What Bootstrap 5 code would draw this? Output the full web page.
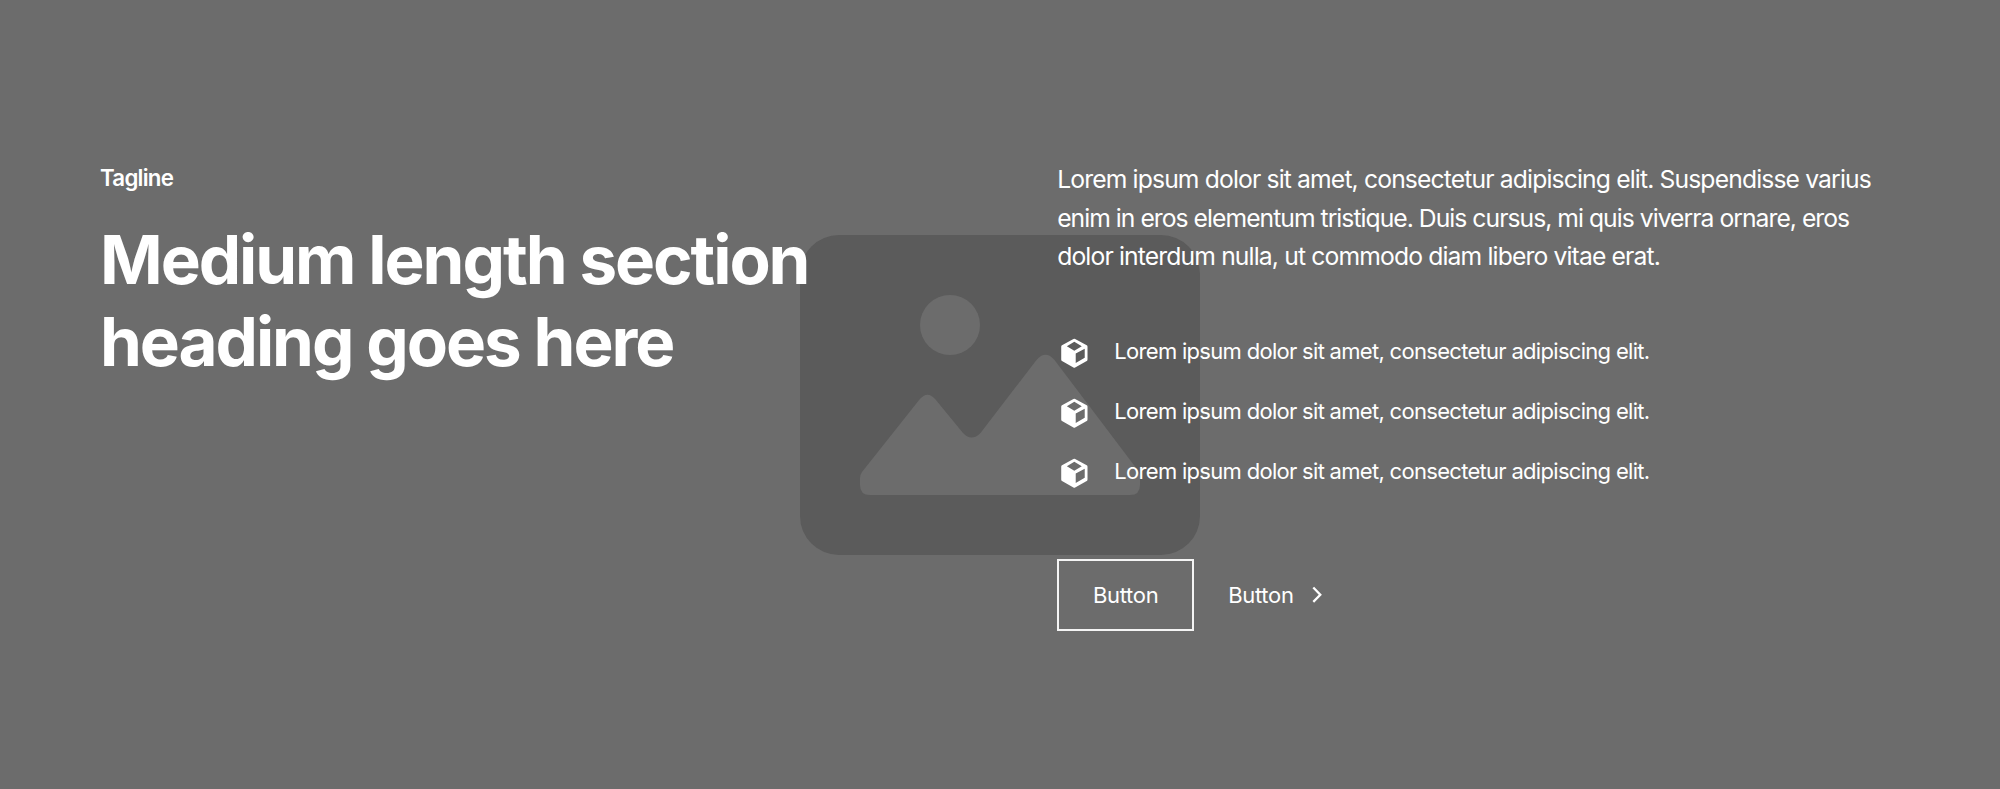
<!DOCTYPE html>
<html lang="en">
<head>
<meta charset="utf-8">
<meta name="viewport" content="width=device-width, initial-scale=1">
<title>Call to action</title>
<link href="https://cdn.jsdelivr.net/npm/bootstrap@5.3.0/dist/css/bootstrap.min.css" rel="stylesheet">
<style>
  body { font-family: Inter, sans-serif; background: #6c6c6c; color: #fff; }
  .hero { height: 789px; padding: 160px 100px; }
  .hero-art { inset: 0; }
  .hero-grid { display: grid; grid-template-columns: minmax(0, 1fr) minmax(0, 1fr); column-gap: 114.3px; }
  .tagline { font-size: 22.3px; line-height: 34.3px; font-weight: 600; letter-spacing: -.75px; margin: 1px 0 23.7px; }
  .hero-title { font-size: 67.3px; line-height: 82.3px; font-weight: 700; letter-spacing: -2.05px; }
  .intro { font-size: 24.7px; line-height: 38.6px; letter-spacing: -.86px; margin-bottom: 46.3px; white-space: nowrap; }
  .intro .tight { letter-spacing: -.97px; }
  .feature { height: 60px; gap: 22.9px; font-size: 22px; letter-spacing: -.7px; }
  .feature svg { margin-top: 2px; }
  .feature span { line-height: 34.3px; margin-bottom: 2px; }
  .actions { margin-top: 56.8px; gap: 34px; }
  .btn-box { --bs-btn-border-radius: 0; --bs-btn-font-size: 22px; --bs-btn-padding-x: 0; --bs-btn-padding-y: 0; width: 137px; height: 72px; padding-top: 2px; border: 2px solid #f4f4f4; letter-spacing: -.3px; }
  .btn-more { --bs-btn-font-size: 22px; letter-spacing: -.3px; gap: 6.2px; }
  .btn-more span { padding-top: 2px; }
</style>
</head>
<body>
<section class="hero position-relative overflow-hidden">
  <div class="hero-art position-absolute d-flex align-items-center justify-content-center">
    <svg width="400" height="320" viewBox="0 0 400 320">
      <rect width="400" height="320" rx="39" fill="#5b5b5b"/>
      <circle cx="150" cy="90" r="30" fill="#6c6c6c"/>
      <path fill="#6c6c6c" d="M60 243Q60 240 62 237L119.500 164.500Q127.500 155 135.500 164.500L163 198Q171.700 207 180.500 198L236.500 125Q245.500 114.500 254.500 125L336.500 233.500Q340 238 340 242V250Q340 260 330 260H70Q60 260 60 250Z"/>
    </svg>
  </div>
  <div class="hero-grid position-relative">
    <div>
      <p class="tagline">Tagline</p>
      <h2 class="hero-title m-0">Medium length section<br>heading goes here</h2>
    </div>
    <div>
      <p class="intro">Lorem ipsum dolor sit amet, consectetur adipiscing elit. Suspendisse varius<br><span class="tight">enim in eros elementum tristique. Duis cursus, mi quis viverra ornare, eros</span><br>dolor interdum nulla, ut commodo diam libero vitae erat.</p>
      <svg class="d-none">
        <symbol id="cube" viewBox="0 0 24 24"><path fill="#fff" fill-rule="evenodd" d="M11.500 2.050Q12.100 1.700 12.700 2.050L20.800 6.500Q21.350 6.850 21.350 7.500V16.500Q21.350 17.200 20.800 17.550L12.700 22.050Q12.100 22.350 11.500 22.050L3.500 17.550Q2.950 17.200 2.950 16.500V7.500Q2.950 6.850 3.500 6.500ZM12.100 4.100L6.900 7.150L12.100 10.250L17.350 7.150ZM13.100 12.200V18.900L19.400 15.250V8.850Z"/></symbol>
      </svg>
      <ul class="list-unstyled m-0">
        <li class="feature d-flex align-items-center"><svg width="34.300" height="34.300"><use href="#cube"/></svg><span>Lorem ipsum dolor sit amet, consectetur adipiscing elit.</span></li>
        <li class="feature d-flex align-items-center"><svg width="34.300" height="34.300"><use href="#cube"/></svg><span>Lorem ipsum dolor sit amet, consectetur adipiscing elit.</span></li>
        <li class="feature d-flex align-items-center"><svg width="34.300" height="34.300"><use href="#cube"/></svg><span>Lorem ipsum dolor sit amet, consectetur adipiscing elit.</span></li>
      </ul>
      <div class="actions d-flex align-items-center">
        <button class="btn btn-box text-white">Button</button>
        <button class="btn btn-more border-0 p-0 text-white d-flex align-items-center"><span>Button</span>
          <svg width="34.300" height="34.300" viewBox="0 0 24 24"><path d="M9.300 6.700L14.200 11.700L9.300 16.700" fill="none" stroke="#fff" stroke-width="1.600"/></svg>
        </button>
      </div>
    </div>
  </div>
</section>
<script src="https://cdn.jsdelivr.net/npm/bootstrap@5.3.0/dist/js/bootstrap.bundle.min.js"></script>
</body>
</html>
